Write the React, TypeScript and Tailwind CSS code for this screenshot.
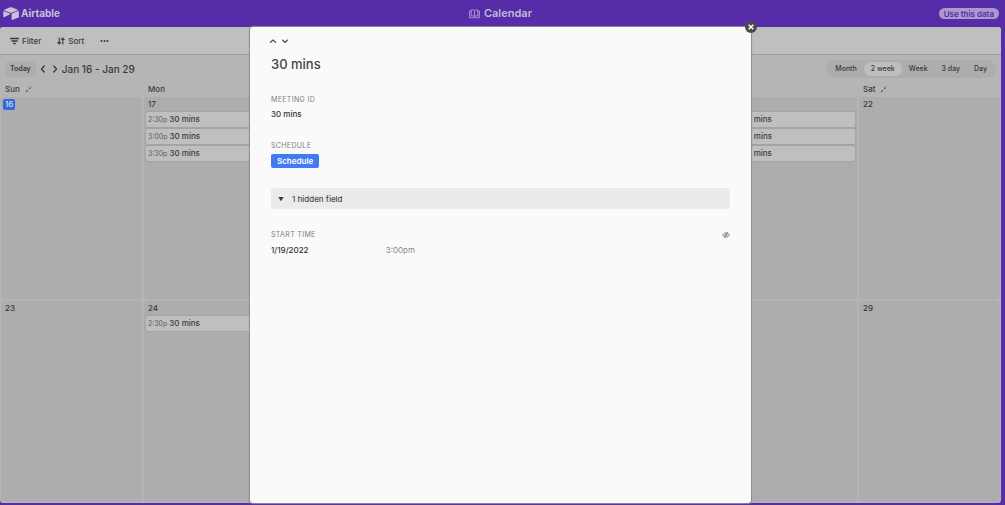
import React from "react";

type CalendarEvent = { time: string; title: string };
type Day = { id: string; label?: string; current?: boolean; events?: CalendarEvent[] };

const halfHourSlots: CalendarEvent[] = [
  { time: "2:30p", title: "30 mins" },
  { time: "3:00p", title: "30 mins" },
  { time: "3:30p", title: "30 mins" },
];

const days: Day[] = [
  { id: "a0", label: "16", current: true },
  { id: "a1", label: "17", events: halfHourSlots },
  { id: "a2" },
  { id: "a3" },
  { id: "a4" },
  { id: "a5", events: halfHourSlots },
  { id: "a6", label: "22" },
  { id: "b0", label: "23" },
  { id: "b1", label: "24", events: [halfHourSlots[0]] },
  { id: "b2" },
  { id: "b3" },
  { id: "b4" },
  { id: "b5" },
  { id: "b6", label: "29" },
];

const weekdays = ["Sun", "Mon", "", "", "", "", "Sat"];
const views = ["Month", "2 week", "Week", "3 day", "Day"];

function AirtableMark() {
  return (
    <svg width="16" height="13" viewBox="0 0 16 13" fill="#c9c2d4" aria-hidden="true">
      <path d="M7.100.3 1.200 2.700c-.4.2-.4.6 0 .8l6 2.300c.5.2 1 .2 1.500 0l6-2.300c.4-.2.4-.6 0-.8L8.800.3C8.200.1 7.700.1 7.100.3z" />
      <path d="M8.600 7v5.500c0 .3.3.5.6.4l6.400-2.500c.2-.1.3-.2.3-.4V4.500c0-.3-.3-.5-.6-.4L8.900 6.600c-.2.100-.3.200-.3.400z" />
      <path d="M7.100 7.300 1 10.200c-.3.100-.7-.1-.7-.4V4.600c0-.3.400-.6.700-.4l6 2.400c.3.100.3.500.100.7z" />
    </svg>
  );
}

function BookIcon() {
  return (
    <svg width="11" height="10" viewBox="0 0 11 10" fill="none" stroke="#b3a3d2" strokeWidth=".9" aria-hidden="true">
      <path d="M5.500 1.500v6M5.500 1.500C4.500.8 3.200.7 2.200 1v6c1-.3 2.300-.2 3.300.5C6.500 6.800 7.800 6.700 8.800 7V1c-1-.3-2.300-.2-3.300.5M1.900 2H.6v6.700h3.800c.3.500 1.900.5 2.200 0h3.800V2H9.100" />
    </svg>
  );
}

function Chevron({ d }: { d: string }) {
  return (
    <svg width="8" height="8" viewBox="0 0 8 8" fill="none" stroke="currentColor" strokeWidth="1.3" strokeLinecap="round" strokeLinejoin="round" aria-hidden="true">
      <path d={d} />
    </svg>
  );
}

function CollapseIcon() {
  return (
    <svg width="7" height="7" viewBox="0 0 7 7" fill="#5a5a5a" stroke="#5a5a5a" strokeWidth=".6" aria-hidden="true">
      <path d="M.4 6.600 2.400 4.600M6.600.4 4.600 2.400" />
      <path d="M.9 3.900h2.200v2.200zM3.900.9v2.200h2.200z" stroke="none" />
    </svg>
  );
}

function Toolbar() {
  return (
    <div className="flex h-7 items-center gap-4 border-b border-[#9c9c9c] bg-[#bfbfbf] px-[10px] text-[8px] font-medium">
      <button className="flex items-center gap-[3px]">
        <svg width="9" height="8" viewBox="0 0 9 8" fill="none" stroke="currentColor" strokeWidth="1.400" aria-hidden="true">
          <path d="M0 1.500h9M1.500 4h6M3.200 6.500h2.600" />
        </svg>
        Filter
      </button>
      <button className="flex items-center gap-[3px]">
        <svg width="8" height="8" viewBox="0 0 8 8" fill="none" stroke="currentColor" strokeWidth="1.100" aria-hidden="true">
          <path d="M2.200.5v6.500M.5 5.200l1.700 1.800 1.700-1.800M5.800 7.500V1M4.100 2.800 5.800 1l1.700 1.800" />
        </svg>
        Sort
      </button>
      <button aria-label="More">
        <svg width="9" height="8" viewBox="0 0 9 8" fill="currentColor" aria-hidden="true">
          <circle cx="1.500" cy="4" r="1" />
          <circle cx="4.500" cy="4" r="1" />
          <circle cx="7.500" cy="4" r="1" />
        </svg>
      </button>
    </div>
  );
}

function DayCell({ day }: { day: Day }) {
  return (
    <div className="rounded-sm bg-[#adadad] px-[2px]">
      <div className="flex h-[15px] items-center text-[8px] font-medium">
        {day.label && (
          <span className={day.current ? "rounded-xs bg-[#2f6bdc] px-[2px] leading-[11px] text-[#d5def0]" : "px-[2px] leading-[11px]"}>
            {day.label}
          </span>
        )}
      </div>
      <div className="flex flex-col gap-[2px]">
        {day.events?.map((event) => (
          <button
            key={event.time}
            className="flex h-[15px] w-full items-baseline gap-[2px] rounded-xs bg-[#bfbfbf] px-[2px] text-left text-[8px] leading-[15px] font-medium shadow-[0_0_1px_1px_#a3a3a3]"
          >
            <span className="text-[7px] font-normal text-[#5c5c5c]">{event.time}</span>
            <span>{event.title}</span>
          </button>
        ))}
      </div>
    </div>
  );
}

function FieldLabel({ children }: { children: React.ReactNode }) {
  return <h3 className="text-[7px] leading-3 tracking-wider text-[#7c7c7c] uppercase">{children}</h3>;
}

function RecordDialog() {
  return (
    <section
      role="dialog"
      aria-label="30 mins"
      className="absolute inset-y-0 right-[250px] left-[250px] rounded-[3px] bg-[#fafafa] px-[21px] text-[8px] text-[#333] shadow-[0_0_1px_1px_#8c8c8c]"
    >
      <button
        aria-label="Close"
        className="absolute -top-[6px] -right-[6px] flex size-3 items-center justify-center rounded-full bg-[#4b4b4b] text-white"
      >
        <svg width="6" height="6" viewBox="0 0 6 6" fill="none" stroke="currentColor" strokeWidth="1.500" aria-hidden="true">
          <path d="m.7.7 4.600 4.600M5.300.7.7 5.300" />
        </svg>
      </button>

      <div className="-ml-[2px] flex gap-1 pt-[10px] text-[#555]">
        <button aria-label="Previous record">
          <Chevron d="M1.500 5.200 4 2.900l2.500 2.300" />
        </button>
        <button aria-label="Next record">
          <Chevron d="M1.500 3.100 4 5.400l2.500-2.300" />
        </button>
      </div>

      <h2 className="mt-[9px] text-[13px] leading-5 font-medium text-[#444]">30 mins</h2>

      <div className="mt-5">
        <FieldLabel>Meeting ID</FieldLabel>
        <p className="mt-[2px] leading-3 font-medium">30 mins</p>
      </div>

      <div className="mt-5">
        <FieldLabel>Schedule</FieldLabel>
        <button className="mt-[2px] flex h-[14px] items-center rounded-xs bg-[#427af0] px-[6px] font-semibold text-white">
          Schedule
        </button>
      </div>

      <button className="mt-5 flex h-[21px] w-full items-center gap-2 rounded-xs bg-[#ebebeb] px-[7px] font-medium text-[#484848]">
        <svg width="6" height="6" viewBox="0 0 6 6" fill="#333" aria-hidden="true">
          <path d="M.4.9h5.200L3 5.300z" />
        </svg>
        1 hidden field
      </button>

      <div className="mt-5">
        <div className="flex h-3 items-center justify-between">
          <FieldLabel>Start time</FieldLabel>
          <button aria-label="Hide field">
            <svg width="8" height="8" viewBox="0 0 8 8" fill="none" stroke="#777" strokeWidth=".8" aria-hidden="true">
              <path d="M.5 4C1.400 2.500 2.600 1.800 4 1.800S6.600 2.500 7.500 4C6.600 5.500 5.400 6.200 4 6.200S1.400 5.500.5 4zM2.300 6.900l3.400-5.800" />
              <circle cx="4" cy="4" r="1.200" />
            </svg>
          </button>
        </div>
        <div className="mt-[3px] grid grid-cols-4 leading-3">
          <span className="font-medium">1/19/2022</span>
          <span className="text-[#8a8a8a]">3:00pm</span>
        </div>
      </div>
    </section>
  );
}

export default function App() {
  return (
    <div className="flex min-h-screen flex-col bg-[#562ca8] pr-1 pb-[2px] font-[Inter,sans-serif] text-[#3a3a3a]">
      <header className="grid h-[27px] shrink-0 grid-cols-3 items-center">
        <a href="#" className="flex items-center gap-[2px] pl-[3px] text-[10px] font-bold text-[#c9c2d4]">
          <AirtableMark />
          Airtable
        </a>
        <h1 className="flex items-center justify-center gap-1 text-[11px] font-semibold text-[#c4badb]">
          <BookIcon />
          Calendar
        </h1>
        <button className="mr-[2px] flex h-[11px] items-center justify-self-end rounded-full bg-[#ab9ac9] px-[5px] text-[8px] font-semibold text-[#562ca8]">
          Use this data
        </button>
      </header>

      <main className="relative flex grow flex-col">
        <div className="flex grow flex-col overflow-hidden rounded-[3px] bg-[#b5b5b5]">
          <Toolbar />
          <div className="flex h-7 items-center justify-between pr-[5px] pl-[5px]">
            <div className="flex items-center">
              <button className="h-[15px] rounded-[3px] bg-[#adadad] px-[5px] text-[7px] font-semibold">Today</button>
              <div className="flex gap-1 px-[3px]">
                <button aria-label="Previous">
                  <Chevron d="M5.200 1 2.500 4l2.700 3" />
                </button>
                <button aria-label="Next">
                  <Chevron d="M2.800 1l2.700 3-2.700 3" />
                </button>
              </div>
              <h2 className="text-[10px] font-medium">Jan 16 - Jan 29</h2>
            </div>
            <div className="flex h-[18px] items-center rounded-full bg-[#adadad] px-[2px] text-[7px] font-medium">
              {views.map((view) => (
                <button
                  key={view}
                  aria-pressed={view === "2 week"}
                  className={view === "2 week" ? "h-[14px] rounded-full bg-[#bfbfbf] px-[7px]" : "h-[14px] px-[7px]"}
                >
                  {view}
                </button>
              ))}
            </div>
          </div>

          <div className="grid grid-cols-7 gap-x-[2px] px-px pb-[2px] text-[8px] leading-3 font-medium">
            {weekdays.map((name, index) => (
              <div key={index} className="flex h-3 items-center gap-[5px] pl-1">
                {name}
                {(name === "Sun" || name === "Sat") && <CollapseIcon />}
              </div>
            ))}
          </div>
          <div className="grid grow auto-rows-fr grid-cols-7 gap-[2px] px-px pb-px">
            {days.map((day) => (
              <DayCell key={day.id} day={day} />
            ))}
          </div>
        </div>
        <RecordDialog />
      </main>
    </div>
  );
}
